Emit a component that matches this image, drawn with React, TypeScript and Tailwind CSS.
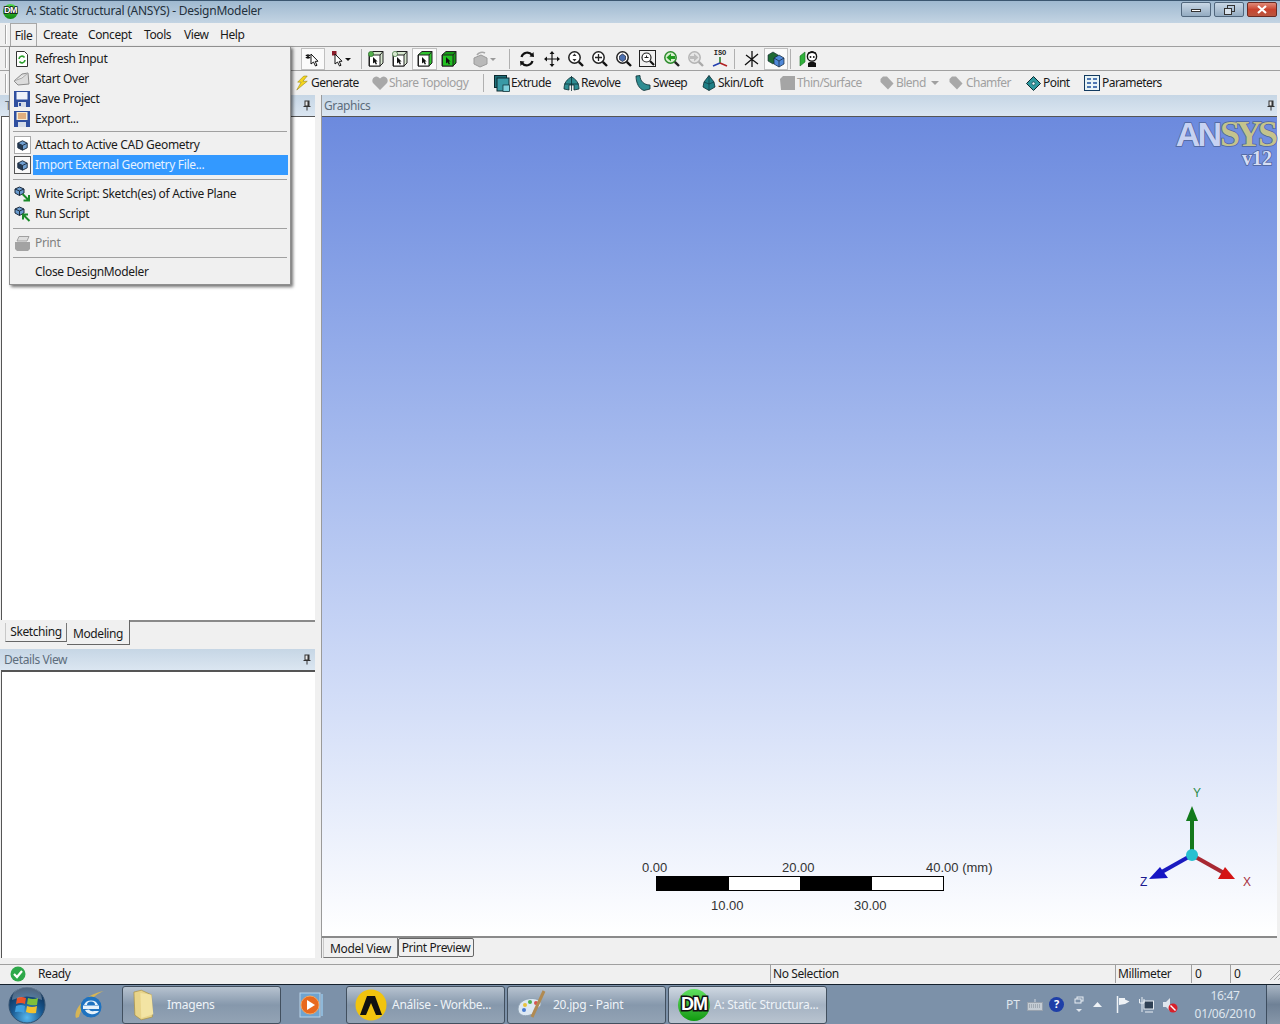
import React from 'react';

type IconProps = { className?: string };

// ---- small toolbar drawings ----
function Cursor({ x = 8, y = 5, fill = 'white', s = 1 }: { x?: number; y?: number; fill?: string; s?: number }) {
  return (
    <path
      transform={`translate(${x} ${y}) scale(${s})`}
      d="M0 0 L0 10 L2.5 8 L4.5 12 L6 11.3 L4.2 7.4 L7 7.2 Z"
      fill={fill}
      stroke="#111"
      strokeWidth="1"
    />
  );
}

function Box({ front, side, dot }: { front: string; side: string; dot?: string }) {
  return (
    <svg width="18" height="18" viewBox="0 0 18 18">
      <path d="M2 5 L6 1.5 L16 1.5 L16 13 L13 16 L2 16 Z" fill={side} stroke="#222" />
      <rect x="2.5" y="5" width="10.5" height="11" fill={front} stroke="#222" />
      <path d="M13 5 L16 1.5" stroke="#222" />
      {dot && <circle cx="4" cy="4" r="2.6" fill={dot} stroke="#1c5d1c" strokeWidth="0.6" />}
      <path d="M6 7 L6 13.5 L7.6 12.2 L8.8 14.5 L10 14 L8.8 11.6 L10.6 11.4 Z" fill="#111" />
    </svg>
  );
}

function Magnifier({ children, ring = '#222', glass = 'white', handle = '#111' }: { children?: React.ReactNode; ring?: string; glass?: string; handle?: string }) {
  return (
    <svg width="18" height="18" viewBox="0 0 18 18">
      <circle cx="7.5" cy="7.5" r="5.7" fill={glass} stroke={ring} strokeWidth="1.5" />
      <path d="M11.8 11.8 L16 16" stroke={handle} strokeWidth="2.4" />
      {children}
    </svg>
  );
}

const topTools: { node: React.ReactNode; pressed?: boolean; sepAfter?: boolean; w: string }[] = [
  {
    node: (
      <svg width="18" height="18" viewBox="0 0 18 18">
        <path d="M4 4 L4 9 M1.8 5 L6.2 8 M6.2 5 L1.8 8" stroke="#111" strokeWidth="1.2" />
        <Cursor x={7} y={4} />
      </svg>
    ),
    pressed: true,
    w: 'w-[24px]',
  },
  {
    node: (
      <svg width="22" height="18" viewBox="0 0 22 18">
        <rect x="1" y="1" width="4.5" height="4.5" fill="#8b1c2a" />
        <Cursor x={4} y={4} />
        <path d="M14 8 L20 8 L17 11 Z" fill="#111" />
      </svg>
    ),
    sepAfter: true,
    w: 'w-[34px]',
  },
  { node: <Box front="white" side="#d8e8d0" dot="#54b04c" />, w: 'w-[24px]' },
  { node: <Box front="white" side="#d8e8d0" dot="#d8e8d0" />, w: 'w-[24px]' },
  { node: <Box front="white" side="#2fc22f" />, pressed: true, w: 'w-[25px]' },
  { node: <Box front="#22c222" side="#149a14" />, w: 'w-[24px]' },
  {
    node: (
      <svg width="26" height="18" viewBox="0 0 26 18">
        <path d="M3 8 L10 5 L16 8 L16 14 L9 17 L3 14 Z" fill="#b9b9b9" stroke="#9a9a9a" />
        <path d="M6 5 A6 6 0 0 1 14 3" fill="none" stroke="#a8a8a8" strokeWidth="1.6" />
        <path d="M19 8 L25 8 L22 11 Z" fill="#9a9a9a" />
      </svg>
    ),
    sepAfter: true,
    w: 'w-[46px]',
  },
  {
    node: (
      <svg width="18" height="18" viewBox="0 0 18 18">
        <path d="M3.5 7 A6 6 0 0 1 14 5" fill="none" stroke="#111" strokeWidth="2.2" />
        <path d="M14.5 11 A6 6 0 0 1 4 13" fill="none" stroke="#111" strokeWidth="2.2" />
        <path d="M11.5 6.5 L16 7 L15.5 2 Z M6.5 11.5 L2 11 L2.5 16 Z" fill="#111" />
      </svg>
    ),
    w: 'ml-[3px] w-[24px]',
  },
  {
    node: (
      <svg width="18" height="18" viewBox="0 0 18 18" fill="#111">
        <path d="M9 1 L11.5 4 L6.5 4 Z M9 17 L11.5 14 L6.5 14 Z M1 9 L4 6.5 L4 11.5 Z M17 9 L14 6.5 L14 11.5 Z" />
        <path d="M9 4 L9 14 M4 9 L14 9" stroke="#111" strokeWidth="1.2" />
      </svg>
    ),
    w: 'w-[25px]',
  },
  {
    node: (
      <Magnifier>
        <path d="M7.5 3.5 L9.5 6 L5.5 6 Z M7.5 11.5 L9.5 9 L5.5 9 Z" fill="#333" />
      </Magnifier>
    ),
    w: 'w-[24px]',
  },
  {
    node: (
      <Magnifier>
        <path d="M7.5 4 L7.5 11 M4 7.5 L11 7.5" stroke="#222" strokeWidth="1.3" />
      </Magnifier>
    ),
    w: 'w-[24px]',
  },
  {
    node: (
      <Magnifier>
        <path d="M4.5 6 L7.5 4 L10.5 6 L10.5 9.5 L7.5 11.5 L4.5 9.5 Z" fill="#4a6fb0" stroke="#223" strokeWidth="0.7" />
      </Magnifier>
    ),
    w: 'w-[24px]',
  },
  {
    node: (
      <svg width="18" height="18" viewBox="0 0 18 18">
        <rect x="0.5" y="0.5" width="16" height="16" fill="none" stroke="#222" />
        <circle cx="7.5" cy="7.5" r="4.5" fill="white" stroke="#222" strokeWidth="1.2" />
        <path d="M5.5 7.5 L9.5 7.5 M7.5 5.5 L7.5 7" stroke="#222" />
        <path d="M11 11 L15 15" stroke="#111" strokeWidth="2.2" />
      </svg>
    ),
    w: 'w-[24px]',
  },
  {
    node: (
      <Magnifier ring="#2b8a2b" glass="#d8efd0" handle="#222">
        <path d="M3.5 7.5 L8 3.5 L8 6 L12 6 L12 9 L8 9 L8 11.5 Z" fill="#1f9a1f" />
      </Magnifier>
    ),
    w: 'w-[24px]',
  },
  {
    node: (
      <Magnifier ring="#b4b4b4" glass="#e6e6e6" handle="#aaa">
        <path d="M11.5 7.5 L7 3.5 L7 6 L3 6 L3 9 L7 9 L7 11.5 Z" fill="#bbbbbb" />
      </Magnifier>
    ),
    w: 'w-[24px]',
  },
  {
    node: (
      <div className="flex flex-col items-center leading-none">
        <span className="font-['Liberation_Mono',monospace] text-[7px] font-bold tracking-normal text-[#222] leading-[7px]">ISO</span>
        <svg width="18" height="11" viewBox="0 0 18 11">
          <path d="M9 0 L9 6" stroke="#1f7a1f" strokeWidth="1.5" />
          <path d="M9 6 L2 9" stroke="#2440b0" strokeWidth="1.5" />
          <path d="M9 6 L16 9" stroke="#b02020" strokeWidth="1.5" />
        </svg>
      </div>
    ),
    sepAfter: true,
    w: 'w-[24px]',
  },
  {
    node: (
      <svg width="18" height="18" viewBox="0 0 18 18" stroke="#111" strokeWidth="1.3" fill="none">
        <path d="M9 1 L9 17 M2 15 L15 4 M3 5 L15 14" />
      </svg>
    ),
    w: 'ml-[2px] w-[25px]',
  },
  {
    node: (
      <svg width="18" height="18" viewBox="0 0 18 18">
        <path d="M1 5 L6 2 L11 5 L11 11 L6 14 L1 11 Z" fill="#1f6a35" stroke="#123" strokeWidth="0.6" />
        <path d="M7 8 L12 5 L17 8 L17 14 L12 17 L7 14 Z" fill="#4f88d8" stroke="#123" strokeWidth="0.7" />
        <path d="M7 8 L12 11 L17 8 M12 11 L12 17" stroke="#123" strokeWidth="0.7" fill="none" />
      </svg>
    ),
    pressed: true,
    sepAfter: true,
    w: 'w-[24px]',
  },
  {
    node: (
      <svg width="20" height="18" viewBox="0 0 20 18">
        <path d="M1 6 L6 2 L6 12 L1 16 Z" fill="#2fb13a" stroke="#176b22" strokeWidth="0.6" />
        <circle cx="13" cy="6.5" r="4.6" fill="white" stroke="#111" strokeWidth="1.4" />
        <path d="M8.5 5 Q13 1 17.5 5 L17 2.5 L13 1 L9 2.5 Z" fill="#111" />
        <circle cx="11.5" cy="7" r="0.9" fill="#111" />
        <circle cx="14.8" cy="7" r="0.9" fill="#111" />
        <path d="M9 13 Q13 10 17 13 L17 17 L9 17 Z" fill="#111" />
      </svg>
    ),
    w: 'ml-[5px] w-[22px]',
  },
];

// ---- feature toolbar drawings ----
function Generate() {
  return (
    <svg width="14" height="18" viewBox="0 0 16 18">
      <path d="M10 1 L3 8 L7 8 L2 17 L14 7 L9 7 L14 1 Z" fill="#f5d51e" stroke="#8a7a10" strokeWidth="0.6" />
    </svg>
  );
}
function Heart() {
  return (
    <svg width="16" height="14" viewBox="0 0 16 14">
      <path d="M8 14 L1 7 A4 4 0 0 1 8 2.5 A4 4 0 0 1 15 7 Z" fill="#a8a8a8" />
    </svg>
  );
}
function Extrude() {
  return (
    <svg width="16" height="17" viewBox="0 0 16 17">
      <rect x="0.5" y="0.5" width="12" height="12" fill="#1f6f78" stroke="#0c2a30" />
      <rect x="3" y="3" width="12" height="13" fill="#3a9aa6" stroke="#0c2a30" />
      <rect x="9" y="10" width="6.5" height="6.5" fill="#7fd0dc" stroke="#0c2a30" strokeWidth="0.7" />
    </svg>
  );
}
function Revolve() {
  return (
    <svg width="17" height="15" viewBox="0 0 17 15">
      <path d="M8.5 1 C4 3 1 7 1 13 L6 14 L6 9 L11 9 L11 14 L16 13 C16 7 13 3 8.5 1 Z" fill="#2f8d92" stroke="#0d2e33" strokeWidth="0.8" />
      <path d="M8.5 0 L8.5 15 M1 8 L16 8" stroke="#0d2e33" strokeWidth="0.8" />
    </svg>
  );
}
function Sweep() {
  return (
    <svg width="16" height="16" viewBox="0 0 16 16">
      <path d="M1 1 L5 0.5 C5 6 9 10 15 10 L15 14 L9 15.5 C4 14 1 8 1 1 Z" fill="#2f8d92" stroke="#0d2e33" strokeWidth="0.8" />
    </svg>
  );
}
function Loft() {
  return (
    <svg width="14" height="16" viewBox="0 0 14 16">
      <path d="M7 0.5 L12 7 L13 12 L7 15.5 L1 12 L2 7 Z" fill="#1f7f86" stroke="#0d2e33" strokeWidth="0.8" />
      <path d="M7 0.5 L7 15.5 M2 7 L7 9 L12 7" stroke="#0d2e33" strokeWidth="0.6" fill="none" />
    </svg>
  );
}
function ThinSurface() {
  return (
    <svg width="15" height="14" viewBox="0 0 15 14">
      <path d="M3 0 L15 0 L15 14 L1 14 L0 3 Z" fill="#a5a5a5" />
    </svg>
  );
}
function Tag() {
  return (
    <svg width="14" height="14" viewBox="0 0 14 14">
      <path d="M0.5 3 L3 0.5 L7 0.5 L13.5 7.5 L8 13.5 L0.5 6 Z" fill="#a8a8a8" />
    </svg>
  );
}
function PointIcon() {
  return (
    <svg width="15" height="15" viewBox="0 0 15 15">
      <path d="M7.5 0.5 L14.5 7.5 L7.5 14.5 L0.5 7.5 Z" fill="#2f9aa0" stroke="#0c2a30" />
      <circle cx="7.5" cy="7.5" r="1.6" fill="#e8fbff" stroke="#0c2a30" strokeWidth="0.6" />
    </svg>
  );
}
function ParamsIcon() {
  return (
    <svg width="16" height="16" viewBox="0 0 16 16">
      <rect x="0.5" y="0.5" width="15" height="15" fill="#e8f4f6" stroke="#123a60" />
      <path d="M3 4 L7 4 M3 8 L7 8 M3 12 L7 12 M9 4 L13 4 M9 8 L13 8 M9 12 L13 12" stroke="#1d4f9c" strokeWidth="1.5" />
    </svg>
  );
}

const features: { label: string; icon: React.ReactNode; off?: boolean; ml: string; box: string; text: string; caret?: boolean; sepAfter?: boolean }[] = [
  { label: 'Generate', icon: <Generate />, ml: 'ml-[281px]', box: 'w-[16px]', text: 'w-[47px]' },
  { label: 'Share Topology', icon: <Heart />, off: true, ml: 'ml-[14px]', box: 'w-[17px]', text: 'w-[83px]', sepAfter: true },
  { label: 'Extrude', icon: <Extrude />, ml: 'ml-[10px]', box: 'w-[17px]', text: 'w-[39px]' },
  { label: 'Revolve', icon: <Revolve />, ml: 'ml-[13px]', box: 'w-[18px]', text: 'w-[41px]' },
  { label: 'Sweep', icon: <Sweep />, ml: 'ml-[13px]', box: 'w-[18px]', text: 'w-[34px]' },
  { label: 'Skin/Loft', icon: <Loft />, ml: 'ml-[15px]', box: 'w-[16px]', text: 'w-[48px]' },
  { label: 'Thin/Surface', icon: <ThinSurface />, off: true, ml: 'ml-[14px]', box: 'w-[17px]', text: 'w-[68px]' },
  { label: 'Blend', icon: <Tag />, off: true, ml: 'ml-[15px]', box: 'w-[16px]', text: 'w-[30px]', caret: true },
  { label: 'Chamfer', icon: <Tag />, off: true, ml: 'ml-[10px]', box: 'w-[17px]', text: 'w-[46px]' },
  { label: 'Point', icon: <PointIcon />, ml: 'ml-[14px]', box: 'w-[17px]', text: 'w-[28px]' },
  { label: 'Parameters', icon: <ParamsIcon />, ml: 'ml-[13px]', box: 'w-[18px]', text: 'w-[59px]' },
];

// ---- file menu drawings ----
function PageIcon({ children }: { children: React.ReactNode }) {
  return (
    <svg width="16" height="16" viewBox="0 0 16 16">
      <path d="M2.5 0.5 L10.5 0.5 L13.5 3.5 L13.5 15.5 L2.5 15.5 Z" fill="white" stroke="#333" />
      {children}
    </svg>
  );
}
function RefreshIcon() {
  return (
    <PageIcon>
      <path d="M5 8 A3 3 0 0 1 10.5 6.5" fill="none" stroke="#2ea02e" strokeWidth="1.6" />
      <path d="M11 9 A3 3 0 0 1 5.5 10.5" fill="none" stroke="#2ea02e" strokeWidth="1.6" />
    </PageIcon>
  );
}
function StartOverIcon() {
  return (
    <svg width="18" height="16" viewBox="0 0 18 16">
      <path d="M1 10 L9 3 L15 2 L16 13 L5 14 Z" fill="#dcdcdc" stroke="#8c8c8c" />
      <path d="M1 10 L9 7 L15 2" fill="#f2f2f2" stroke="#a8a8a8" />
    </svg>
  );
}
function SaveIcon() {
  return (
    <svg width="16" height="16" viewBox="0 0 16 16">
      <rect width="16" height="16" fill="#2f4f9f" />
      <rect x="2.5" y="1" width="11" height="7.5" fill="#eef2fa" />
      <rect x="4" y="11" width="8" height="5" fill="#d5dce8" />
      <rect x="5" y="12" width="2" height="3" fill="#2f4f9f" />
    </svg>
  );
}
function ExportIcon() {
  return (
    <svg width="16" height="16" viewBox="0 0 16 16">
      <rect width="16" height="16" fill="#2f4f9f" />
      <rect x="2.5" y="1" width="11" height="8" fill="#f6ead2" />
      <path d="M4 3 L12 3 M4 5 L12 5 M4 7 L12 7" stroke="#c8702a" />
      <rect x="4" y="11" width="8" height="5" fill="#d5dce8" />
    </svg>
  );
}
function CubeGlyph() {
  return (
    <g>
      <path d="M8 3.5 L13 6 L13 11 L8 13.5 L3 11 L3 6 Z" fill="#6f9fd0" stroke="#1c2a3c" />
      <path d="M3 6 L8 8.5 L13 6 M8 8.5 L8 13.5" fill="none" stroke="#1c2a3c" />
      <path d="M3 6 L8 8.5 L8 13.5 L3 11 Z" fill="#24384f" />
    </g>
  );
}
function CadIcon({ framed }: { framed?: boolean }) {
  return (
    <span className={`flex h-[18px] w-[17px] items-center justify-center ${framed ? 'border border-[#555] bg-[#f8f8f8]' : 'border border-[#aaa] bg-white'}`}>
      <svg width="16" height="16" viewBox="0 0 16 16">
        <CubeGlyph />
      </svg>
    </span>
  );
}
function ScriptIcon({ back }: { back?: boolean }) {
  return (
    <svg width="17" height="16" viewBox="0 0 17 16">
      <path d="M1 3 L5.5 1 L10 3 L10 7 L5.5 9.5 L1 7 Z" fill="#6b9cce" stroke="#1c2a3c" />
      <path d="M1 3 L5.5 5 L10 3 M5.5 5 L5.5 9.5" fill="none" stroke="#1c2a3c" />
      {back ? (
        <path d="M15.5 15 L9.5 9 M9 13.5 L9 8.5 L14 8.5" fill="none" stroke="#1a8a2a" strokeWidth="2" />
      ) : (
        <path d="M8.5 8 L14.5 14 M15 9 L15 14.5 L9.5 14.5" fill="none" stroke="#1a8a2a" strokeWidth="2" />
      )}
    </svg>
  );
}
function PrintIcon() {
  return (
    <svg width="17" height="15" viewBox="0 0 17 15">
      <path d="M5 0.5 L15 0.5 L13 5 L3 5 Z" fill="#dedede" stroke="#a0a0a0" />
      <path d="M1 6 L16 6 L16 13 L14 15 L3 15 L1 13 Z" fill="#a3a3a3" />
    </svg>
  );
}

type MenuRow = { label?: string; icon?: React.ReactNode; sep?: string; active?: boolean; off?: boolean };
const fileMenu: MenuRow[] = [
  { label: 'Refresh Input', icon: <RefreshIcon /> },
  { label: 'Start Over', icon: <StartOverIcon /> },
  { label: 'Save Project', icon: <SaveIcon /> },
  { label: 'Export...', icon: <ExportIcon /> },
  { sep: 'mt-[2px] mb-[3px]' },
  { label: 'Attach to Active CAD Geometry', icon: <CadIcon /> },
  { label: 'Import External Geometry File...', icon: <CadIcon framed />, active: true },
  { sep: 'mt-[4px] mb-[4px]' },
  { label: 'Write Script: Sketch(es) of Active Plane', icon: <ScriptIcon /> },
  { label: 'Run Script', icon: <ScriptIcon back /> },
  { sep: 'mt-[4px] mb-[4px]' },
  { label: 'Print', icon: <PrintIcon />, off: true },
  { sep: 'mt-[4px] mb-[4px]' },
  { label: 'Close DesignModeler' },
];

function FileMenu() {
  return (
    <div className="absolute left-[9px] top-[46px] z-20 h-[239px] w-[282px] border border-[#8f8f8f] bg-[#f0f0f0] pt-[2px] tracking-[-0.33px] shadow-[2px_2px_3px_rgba(0,0,0,0.55)]">
      {fileMenu.map((row, i) =>
        row.sep ? (
          <div key={i} className={`ml-[3px] mr-[3px] h-px bg-[#a0a0a0] ${row.sep}`} />
        ) : (
          <div key={i} className="flex h-[20px] items-center">
            <span className="flex w-[23px] shrink-0 items-center justify-center pl-[1px]">{row.icon}</span>
            <span
              className={`mr-[2px] flex h-full flex-1 items-center pl-[2px] text-[12px] ${
                row.active ? 'bg-[#3399ff] text-[#e6f2ff]' : row.off ? 'text-[#808080]' : 'text-[#1a1a1a]'
              }`}
            >
              {row.label}
            </span>
          </div>
        ),
      )}
    </div>
  );
}

function Pin({ className }: IconProps) {
  return (
    <svg width="8" height="11" viewBox="0 0 8 11" className={className}>
      <path d="M1.5 0.5 L6.5 0.5 L6.5 6 L7.5 6 L7.5 7 L4.5 7 L4.5 10.5 L3.5 10.5 L3.5 7 L0.5 7 L0.5 6 L1.5 6 Z" fill="#333" />
      <rect x="2.5" y="1.5" width="2" height="4" fill="#e8e8e8" />
    </svg>
  );
}

function PanelHeader({ title, pl = 'pl-[4px]', pr = 'pr-[4px]' }: { title: string; pl?: string; pr?: string }) {
  return (
    <div className={`flex h-[21px] shrink-0 items-center justify-between bg-gradient-to-b from-[#c6d6e5] to-[#dbe6f1] text-[12px] tracking-[-0.4px] text-[#5d6d7c] ${pl} ${pr}`}>
      <span>{title}</span>
      <Pin />
    </div>
  );
}

function Triad() {
  return (
    <svg width="130" height="105" viewBox="0 0 130 105" className="absolute right-[25px] top-[668px]">
      <path d="M70 70 L70 30" stroke="#14781c" strokeWidth="4" />
      <path d="M70 21 L76 36 L64 36 Z" fill="#127a1c" />
      <path d="M70 70 L38 88" stroke="#1a1ac0" strokeWidth="4" />
      <path d="M27 94 L46 93 L38 82 Z" fill="#1515c4" />
      <path d="M70 70 L102 88" stroke="#a82832" strokeWidth="4" />
      <path d="M113 94 L96 94 L103 82 Z" fill="#d41414" />
      <circle cx="70" cy="70" r="6" fill="#28c0d0" />
      <text x="71" y="12" fontSize="12" fill="#2a8a4a" fontFamily="Liberation Sans, sans-serif">Y</text>
      <text x="18" y="101" fontSize="12" fill="#1a1a90" fontFamily="Liberation Sans, sans-serif">Z</text>
      <text x="121" y="101" fontSize="12" fill="#a83040" fontFamily="Liberation Sans, sans-serif">X</text>
    </svg>
  );
}

function ScaleBar() {
  return (
    <div className="absolute left-[320px] top-[743px] w-[360px] font-['Liberation_Sans',sans-serif] text-[13px] leading-[16px] tracking-normal text-[#333]">
      <div className="relative h-[16px]">
        <span className="absolute left-[0px]">0.00</span>
        <span className="absolute left-[140px]">20.00</span>
        <span className="absolute left-[284px]">40.00 (mm)</span>
      </div>
      <div className="ml-[14px] flex h-[15px] w-[288px] border border-black bg-white">
        <div className="flex-1 bg-black" />
        <div className="flex-1 bg-white" />
        <div className="flex-1 bg-black" />
        <div className="flex-1 bg-white" />
      </div>
      <div className="relative mt-[7px] h-[16px]">
        <span className="absolute left-[69px]">10.00</span>
        <span className="absolute left-[212px]">30.00</span>
      </div>
    </div>
  );
}

function Logo() {
  return (
    <div className="absolute right-[3px] top-[2px] flex flex-col items-end tracking-normal">
      <div className="flex h-[31px] items-baseline">
        <span className="font-['Liberation_Sans',sans-serif] text-[34px] font-bold leading-[31px] tracking-[-3px] text-[#c7d2f2] [paint-order:stroke_fill] [-webkit-text-stroke:1.5px_#4f649c]">AN</span>
        <span className="ml-[1px] font-['Liberation_Serif',serif] text-[36px] font-bold leading-[31px] tracking-[-4px] text-[#c4c38c] [paint-order:stroke_fill] [-webkit-text-stroke:1.5px_#4f649c]">SYS</span>
      </div>
      <div className="mr-[2px] font-['Liberation_Serif',serif] text-[20px] font-bold leading-[17px] text-[#d6def4] [paint-order:stroke_fill] [-webkit-text-stroke:1.5px_#4f649c]">v12</div>
    </div>
  );
}

// ---- taskbar drawings ----
function StartOrb() {
  return (
    <svg width="38" height="38" viewBox="0 0 38 38">
      <defs>
        <radialGradient id="orb" cx="50%" cy="85%" r="80%">
          <stop offset="0%" stopColor="#58b8ee" />
          <stop offset="55%" stopColor="#17568f" />
          <stop offset="100%" stopColor="#0c2c50" />
        </radialGradient>
      </defs>
      <circle cx="19" cy="19" r="18" fill="url(#orb)" stroke="#31506f" />
      <path d="M9 12 Q13 10 18 12 L17 18 Q13 16 8 18 Z" fill="#e8532b" />
      <path d="M20 12 Q25 14 30 12 L29 19 Q24 20 19 18 Z" fill="#7fbf3a" />
      <path d="M8 20 Q13 18 17 20 L16 27 Q12 25 7 26 Z" fill="#3f9fe0" />
      <path d="M19 20 Q24 22 29 20 L28 27 Q23 28 18 26 Z" fill="#f2c12e" />
      <path d="M4 14 A15 14 0 0 1 34 14 Q19 7 4 14 Z" fill="white" opacity="0.28" />
    </svg>
  );
}
function IeIcon() {
  return (
    <svg width="34" height="34" viewBox="0 0 34 34">
      <path d="M3 30 C0 22 12 6 31 3 C24 5 8 18 6 29 Z" fill="#d6b556" />
      <circle cx="18" cy="19" r="10.5" fill="#1e72c0" />
      <rect x="10" y="17.5" width="16" height="3.5" fill="#e6f2fb" />
      <path d="M11 17 A7.5 7 0 0 1 25 17 Z" fill="#e6f2fb" />
      <path d="M14 17 A4 3.6 0 0 1 22 17 Z" fill="#1e72c0" />
      <path d="M12 22 A8 7 0 0 0 26 23 L21 23 A4 3 0 0 1 16 21.5 Z" fill="#e6f2fb" />
    </svg>
  );
}
function FolderIcon() {
  return (
    <svg width="24" height="34" viewBox="0 0 26 34">
      <path d="M1 3 L9 1 L20 6 L21 30 L9 33 L2 28 Z" fill="#e8d48a" stroke="#a68c3c" strokeWidth="0.7" />
      <path d="M8 4 L20 6 L22 27 L9 31 Z" fill="#f3e4a4" />
    </svg>
  );
}
function MediaIcon() {
  return (
    <svg width="28" height="26" viewBox="0 0 28 26">
      <rect x="2" y="1" width="20" height="24" fill="#6fa4d0" stroke="#b8d4ea" />
      <rect x="23" y="2" width="2" height="22" fill="#8fb8d8" />
      <circle cx="12" cy="13" r="9" fill="#e8691e" stroke="#f6a45c" />
      <path d="M9 8 L17 13 L9 18 Z" fill="white" />
    </svg>
  );
}
function AnsysIcon() {
  return (
    <svg width="32" height="32" viewBox="0 0 32 32">
      <circle cx="16" cy="16" r="15.5" fill="#f1c40f" />
      <path d="M12 7 L20 7 L27 26 L21 26 L16 14 L11 26 L5 26 Z" fill="#111" />
    </svg>
  );
}
function PaintIcon() {
  return (
    <svg width="32" height="32" viewBox="0 0 32 32">
      <path d="M2 20 C2 12 12 8 20 10 C27 12 26 18 21 19 C17 20 19 25 14 26 C8 28 2 26 2 20 Z" fill="#dde8f2" stroke="#8fa2b4" />
      <circle cx="9" cy="16" r="2" fill="#e8c23c" />
      <circle cx="14" cy="13" r="2" fill="#4cae4c" />
      <circle cx="20" cy="14" r="2" fill="#d9534f" />
      <circle cx="8" cy="21" r="2" fill="#4a7bd0" />
      <path d="M28 2 L16 28" stroke="#b08a52" strokeWidth="3" />
    </svg>
  );
}

function DmBadge({ size = 'big' }: { size?: 'big' | 'small' }) {
  const big = size === 'big';
  return (
    <span
      className={
        big
          ? "flex h-[32px] w-[32px] shrink-0 items-center justify-center rounded-full bg-gradient-to-b from-[#5fe05f] to-[#0c9a0c] font-['Liberation_Sans',sans-serif] text-[18px] font-bold tracking-[-1px] text-white [paint-order:stroke_fill] [-webkit-text-stroke:3px_#111]"
          : "flex h-[15px] w-[15px] shrink-0 items-center justify-center rounded-full bg-gradient-to-b from-[#4fd84f] to-[#0c8a0c] font-['Liberation_Sans',sans-serif] text-[9px] font-bold tracking-[-0.5px] text-white [paint-order:stroke_fill] [-webkit-text-stroke:1.5px_#111]"
      }
    >
      DM
    </span>
  );
}

function TaskButton({ icon, label, active, cls }: { icon: React.ReactNode; label: string; active?: boolean; cls: string }) {
  return (
    <div
      className={`flex h-[38px] w-[159px] shrink-0 items-center rounded-[3px] border border-[#42505f] text-[12px] tracking-[-0.25px] text-[#eef3f8] ${cls} ${
        active ? 'bg-gradient-to-b from-[#cfd8e2] via-[#a4b2c2] to-[#b9c4d0]' : 'bg-gradient-to-b from-[#b7c3d0] via-[#8698ac] to-[#93a3b5]'
      }`}
    >
      {icon}
      <span>{label}</span>
    </div>
  );
}

function Taskbar() {
  return (
    <div className="flex h-[40px] shrink-0 items-center border-t border-[#14202c] bg-[#7c91a9]">
      <span className="ml-[8px] flex w-[38px] justify-center">
        <StartOrb />
      </span>
      <span className="ml-[27px] flex w-[34px] justify-center">
        <IeIcon />
      </span>
      <span className="ml-[15px]">
        <TaskButton icon={<FolderIcon />} label="Imagens" cls="gap-[10px] pl-[10px]" />
      </span>
      <span className="ml-[16px] flex w-[30px] justify-center">
        <MediaIcon />
      </span>
      <span className="ml-[19px] flex gap-[2px]">
        <TaskButton icon={<AnsysIcon />} label="Análise - Workbe..." cls="gap-[5px] pl-[8px]" />
        <TaskButton icon={<PaintIcon />} label="20.jpg - Paint" cls="gap-[5px] pl-[8px]" />
        <TaskButton icon={<DmBadge />} label="A: Static Structura..." active cls="gap-[4px] pl-[9px]" />
      </span>
      <div className="ml-auto flex h-full items-center tracking-normal text-[#dfe6ee]">
        <span className="mr-[7px] text-[12px]">PT</span>
        <svg width="16" height="12" viewBox="0 0 16 12" className="mr-[6px]">
          <path d="M8 0 L8 3" stroke="#cfd6de" />
          <rect x="0.5" y="3.5" width="15" height="8" fill="#c4ccd4" stroke="#98a2ae" />
          <path d="M2 6 L14 6 M2 8 L14 8" stroke="#7f8a96" strokeDasharray="1 1" />
        </svg>
        <span className="mr-[10px] flex h-[15px] w-[15px] items-center justify-center rounded-full bg-[#1e3fa8] text-[11px] font-bold text-white">?</span>
        <svg width="10" height="17" viewBox="0 0 10 17" className="mr-[9px]">
          <rect x="3" y="1" width="6" height="4" fill="none" stroke="#e8eef4" />
          <rect x="1" y="3" width="6" height="4" fill="#7c91a9" stroke="#e8eef4" />
          <path d="M2 13 L8 13 L5 16 Z" fill="#dde4ec" />
        </svg>
        <svg width="9" height="5" viewBox="0 0 9 5" className="mr-[14px]">
          <path d="M0 5 L4.5 0 L9 5 Z" fill="#eef2f6" />
        </svg>
        <svg width="14" height="17" viewBox="0 0 14 17" className="mr-[9px]">
          <path d="M1.5 0 L1.5 17" stroke="#eef2f6" strokeWidth="1.5" />
          <path d="M3 2 L9 2 L9 3.5 L13.5 5.5 L9 8 L3 9 Z" fill="#eef2f6" />
        </svg>
        <svg width="15" height="16" viewBox="0 0 15 16" className="mr-[8px]">
          <rect x="5" y="4" width="9.5" height="8" fill="#2f4155" stroke="#e8eef4" />
          <path d="M3 0 L3 15 M0.5 2 L0.5 6 L5 6 L5 2 M6 15 L14 15" stroke="#e8eef4" fill="none" />
        </svg>
        <svg width="16" height="16" viewBox="0 0 16 16" className="mr-[18px]">
          <path d="M1 5 L4 5 L8 1 L8 14 L4 10 L1 10 Z" fill="#dfe6ee" />
          <circle cx="11" cy="11" r="4.5" fill="#d8202a" />
          <path d="M8.5 8.5 L13.5 13.5" stroke="white" strokeWidth="1.4" />
        </svg>
        <div className="mr-[12px] flex w-[58px] flex-col items-center whitespace-nowrap text-[12px] leading-[18px] tracking-[-0.3px]">
          <span>16:47</span>
          <span>01/06/2010</span>
        </div>
        <div className="h-full w-[14px] border-l border-[#3d4d5f] bg-gradient-to-b from-[#a9b6c4] via-[#6f8196] to-[#8797a9]" />
      </div>
    </div>
  );
}

const wordMenus = [
  { label: 'Create', w: 'w-[34px]' },
  { label: 'Concept', w: 'w-[45px]' },
  { label: 'Tools', w: 'w-[29px]' },
  { label: 'View', w: 'w-[25px]' },
  { label: 'Help', w: 'w-[25px]' },
];

function Grip() {
  return <span className="ml-[5px] h-[19px] w-[2px] shrink-0 border-l border-[#a8a8a8] bg-white" />;
}

export default function App() {
  return (
    <div className="relative flex h-[1024px] w-[1280px] flex-col overflow-hidden bg-[#f0f0f0] font-['Noto_Sans',sans-serif] text-[12px] tracking-[-0.4px] text-[#1a1a1a]">
      {/* Title bar */}
      <header className="flex h-[23px] shrink-0 items-center border-t border-[#3b5670] bg-gradient-to-b from-[#9fb9d0] to-[#c3d4e3] pb-[2px] pl-[3px]">
        <DmBadge size="small" />
        <span className="ml-[8px] tracking-[-0.25px] text-[#23303c]">A: Static Structural (ANSYS) - DesignModeler</span>
        <div className="ml-auto mr-[3px] flex h-[18px] items-start">
          <div className="flex h-[15px] w-[30px] items-center justify-center rounded-[2px] border border-[#51677d] bg-gradient-to-b from-[#c9d8e6] to-[#93abc1]">
            <span className="mt-[2px] block h-[3px] w-[10px] border border-[#333] bg-white" />
          </div>
          <div className="ml-[3px] flex h-[15px] w-[30px] items-center justify-center rounded-[2px] border border-[#51677d] bg-gradient-to-b from-[#c9d8e6] to-[#93abc1]">
            <svg width="11" height="10" viewBox="0 0 11 10" fill="none" stroke="#333">
              <rect x="3.5" y="0.5" width="7" height="6" />
              <rect x="0.5" y="3.5" width="7" height="6" fill="#d7e2ec" />
            </svg>
          </div>
          <div className="ml-[3px] flex h-[15px] w-[30px] items-center justify-center rounded-[2px] border border-[#6b2a22] bg-gradient-to-b from-[#e08a78] via-[#c9432e] to-[#b9553f]">
            <svg width="10" height="9" viewBox="0 0 10 9" stroke="white" strokeWidth="2.2">
              <path d="M1 1 L9 8 M9 1 L1 8" />
            </svg>
          </div>
        </div>
      </header>

      {/* Menu bar */}
      <nav className="flex h-[24px] shrink-0 items-center border-b border-[#a0a0a0]">
        <Grip />
        <span className="ml-[3px] flex h-[23px] w-[27px] items-center justify-center border-x border-t border-[#a8a8a8] pt-px">File</span>
        {wordMenus.map((m, i) => (
          <span key={m.label} className={`${m.w} whitespace-nowrap ${i === 0 ? 'ml-[6px]' : 'ml-[11px]'}`}>
            {m.label}
          </span>
        ))}
      </nav>

      {/* Selection and view toolbar */}
      <div className="flex h-[24px] shrink-0 items-center border-b border-[#a0a0a0]">
        <Grip />
        <span className="ml-[294px]" />
        {topTools.map((t, i) => (
          <React.Fragment key={i}>
            <span className={`flex h-[22px] shrink-0 items-center justify-center ${t.w} ${t.pressed ? 'border border-[#c0c0c0] bg-[#fafafa]' : ''}`}>
              {t.node}
            </span>
            {t.sepAfter && <span className="mx-[2px] h-[20px] w-px shrink-0 bg-[#b0b0b0]" />}
          </React.Fragment>
        ))}
      </div>

      {/* Feature toolbar */}
      <div className="flex h-[24px] shrink-0 items-center tracking-[-0.55px]">
        <Grip />
        <span className="ml-[7px]" />
        {features.map((f) => (
          <React.Fragment key={f.label}>
            <span className={`flex items-center ${f.ml} ${f.off ? 'text-[#a0a0a0]' : 'text-[#1a1a1a]'}`}>
              <span className={`flex shrink-0 items-center ${f.box}`}>{f.icon}</span>
              <span className={`whitespace-nowrap ${f.text}`}>{f.label}</span>
              {f.caret && (
                <svg width="8" height="4" viewBox="0 0 8 4" className="ml-[5px]">
                  <path d="M0 0 L8 0 L4 4 Z" fill="#a0a0a0" />
                </svg>
              )}
            </span>
            {f.sepAfter && <span className="ml-[11px] h-[18px] w-px bg-[#b0b0b0]" />}
          </React.Fragment>
        ))}
      </div>

      {/* Workspace */}
      <div className="flex min-h-0 flex-1">
        <aside className="flex w-[315px] shrink-0 flex-col">
          {/* only the first letter of this title shows past the open menu */}
          <PanelHeader title="T" pl="pl-[5px]" />
          <div className="ml-px min-h-0 flex-1 border-l border-t border-[#555] bg-white" />
          <div className="flex h-[29px] shrink-0 items-start">
            <span className="ml-[5px] mt-[3px] flex h-[19px] w-[62px] items-center justify-center border-x border-b border-[#c8c8c8] border-b-[#666] border-r-[#777]">Sketching</span>
            <span className="flex h-[25px] w-[63px] items-center justify-center border-b border-r border-[#666] pt-[4px]">Modeling</span>
            <span className="h-full flex-1 border-t-2 border-[#8a8a8a]" />
          </div>
          <PanelHeader title="Details View" />
          <div className="ml-px h-[288px] shrink-0 border-l border-t-2 border-[#555] bg-white" />
        </aside>

        <div className="ml-[6px] flex w-[956px] shrink-0 flex-col border-l border-[#9a9a9a]">
          <PanelHeader title="Graphics" pl="pl-[2px]" pr="pr-[2px]" />
          <div className="relative min-h-0 flex-1 border-t border-[#555] bg-gradient-to-b from-[#6c8ade] to-white">
            <Logo />
            <ScaleBar />
            <Triad />
          </div>
          <div className="flex h-[22px] shrink-0 items-start border-t-2 border-[#8a8a8a] pl-[1px]">
            <span className="flex h-[20px] w-[75px] items-center justify-center border-x border-b border-[#777] border-l-[#c8c8c8] pt-[2px]">Model View</span>
            <span className="flex h-[19px] w-[76px] items-center justify-center rounded-[2px] border border-[#666]">Print Preview</span>
          </div>
        </div>
      </div>

      {/* Status bar */}
      <footer className="mt-[6px] flex h-[20px] shrink-0 items-center border-t border-[#a0a0a0] pb-px">
        <svg width="16" height="16" viewBox="0 0 16 16" className="ml-[10px]">
          <circle cx="8" cy="8" r="7.5" fill="#2ea84a" />
          <path d="M4 8 L7 11 L12 5" fill="none" stroke="white" strokeWidth="2.2" />
        </svg>
        <span className="ml-[12px] w-[732px]">Ready</span>
        <span className="flex h-full w-[345px] items-center border-l border-[#a0a0a0] pl-[2px]">No Selection</span>
        <span className="flex h-full w-[76px] items-center border-l border-[#a0a0a0] pl-[2px]">Millimeter</span>
        <span className="flex h-full w-[39px] items-center border-l border-[#a0a0a0] pl-[3px]">0</span>
        <span className="flex h-full flex-1 items-center justify-between border-l border-[#a0a0a0] pl-[3px]">
          0
          <svg width="12" height="12" viewBox="0 0 12 12" stroke="#a8a8a8">
            <path d="M12 2 L2 12 M12 6 L6 12 M12 10 L10 12" />
          </svg>
        </span>
      </footer>

      <Taskbar />
      <FileMenu />
    </div>
  );
}
